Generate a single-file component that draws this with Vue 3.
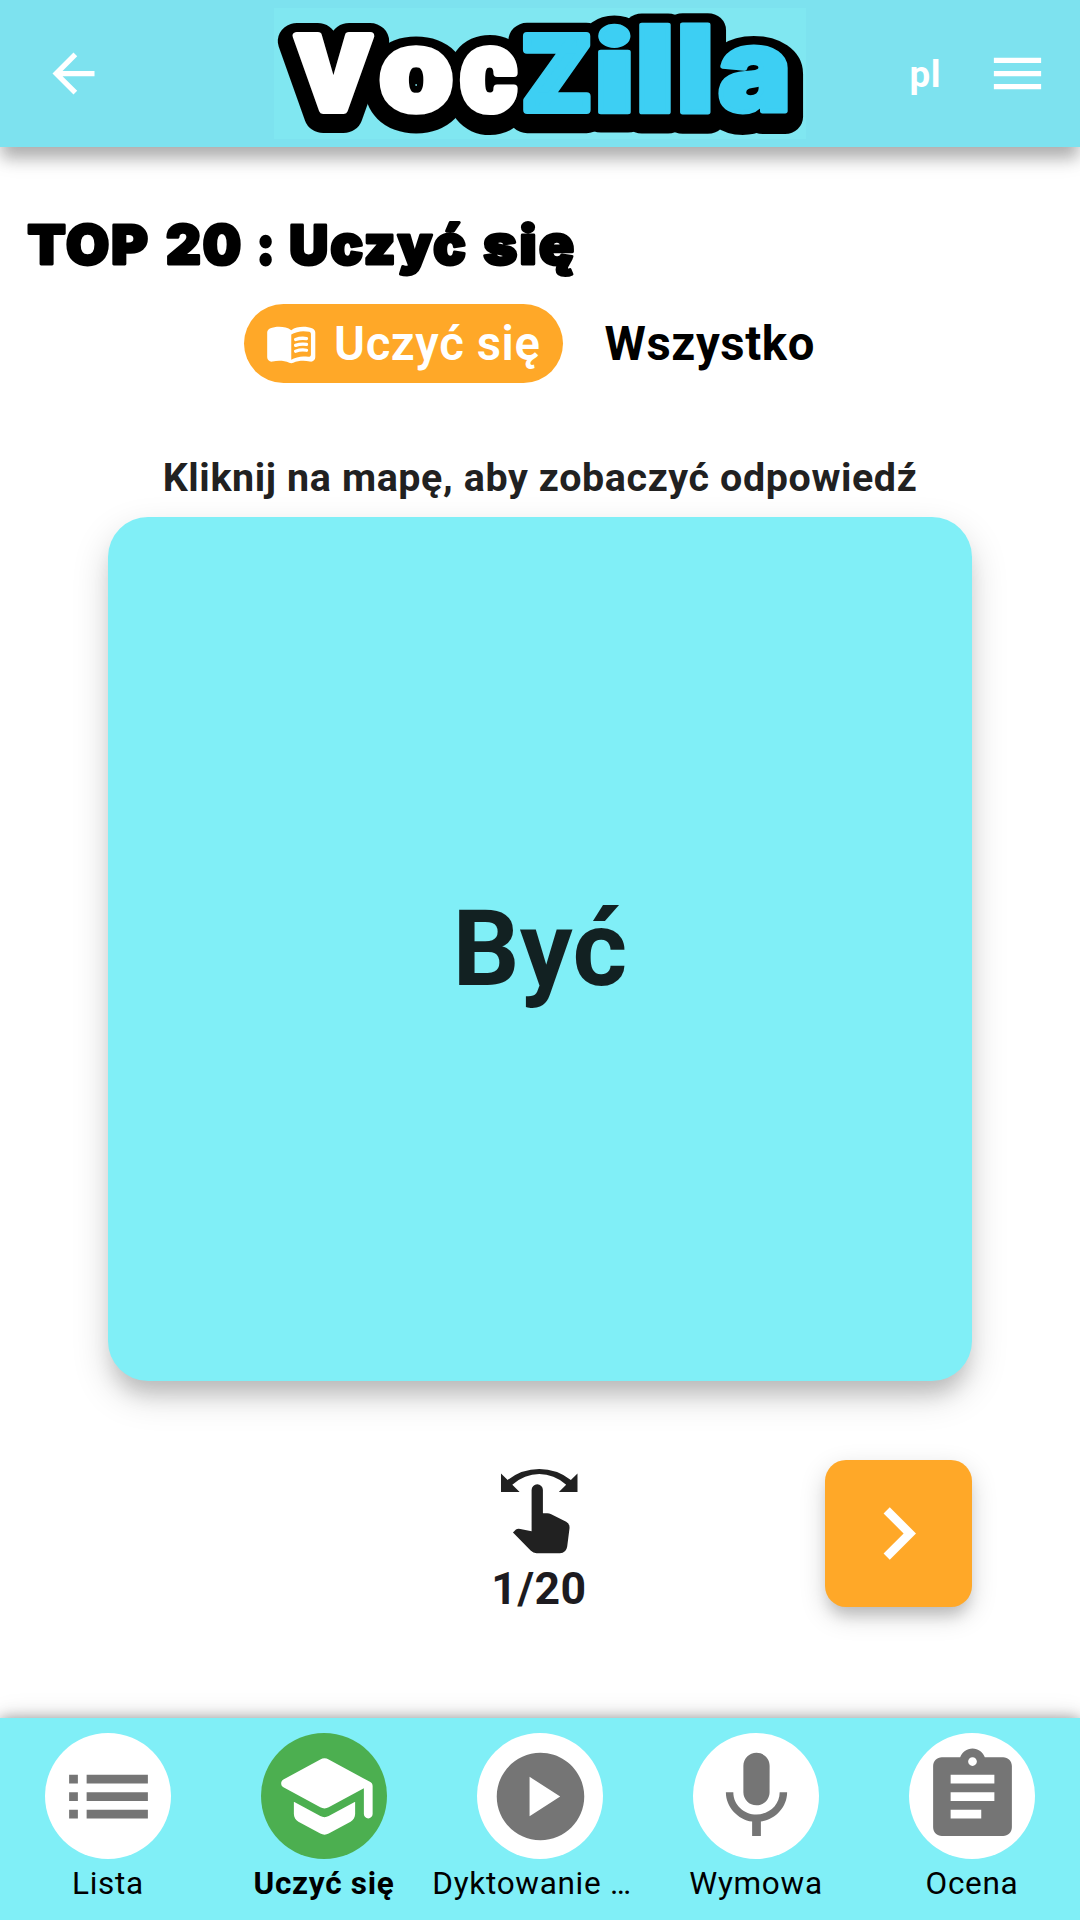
<script setup>
import { ref } from 'vue'

const ctx = document.createElement('canvas').getContext('2d')

// Matrix that stretches a string so that its ink fills the box x1..x2, y1..y2.
// capOnly fits the height of a capital letter instead of the full ink.
function fit(face, text, x1, x2, y1, y2, stroke, capOnly) {
  ctx.font = `900 100px ${face}, sans-serif`
  ctx.letterSpacing = capOnly ? '4px' : '0px'
  const m = ctx.measureText(text)
  const v = capOnly ? ctx.measureText('H') : m
  const h = stroke / 2
  const left = -m.actualBoundingBoxLeft
  const up = v.actualBoundingBoxAscent
  const down = capOnly ? 0 : v.actualBoundingBoxDescent
  const sx = (x2 - x1 - stroke) / (m.actualBoundingBoxRight - left)
  const sy = (y2 - y1 - stroke) / (up + down)
  return `matrix(${sx} 0 0 ${sy} ${x1 + h - left * sx} ${y1 + h + up * sy})`
}

const logo = [
  ['V', 292, 375, 31, 114, 'Roboto', 8],
  ['o', 379, 453, 45, 115, 'Roboto', 8],
  ['c', 459, 518, 45, 115, 'Roboto', 8],
  ['Z', 523, 591, 31, 114, 'Roboto', 8],
  ['i', 597, 631, 22, 114, 'Inter', 5],
  ['l', 638, 671, 22, 114, 'Inter', 5],
  ['l', 679, 711, 22, 114, 'Inter', 5],
  ['a', 718, 788, 45, 115, 'Inter', 5],
].map(([t, a, b, c, d, face, s], i) => ({
  t,
  m: fit(face, t, a, b, c, d, s),
  kind: face === 'Inter' ? 'round' : 'block',
  fill: i < 3 ? '#fff' : '#3dcff3',
}))

const title = [
  ['TOP', 27, 148.5],
  ['20', 166, 241],
  [':', 259, 272],
  ['Uczyć', 290, 466],
  ['się', 483, 574],
].map(([t, a, b]) => ({ t, m: fit('Inter', t, a, b, 76, 118, 3, true) }))

const active = ref(1)
const nav = [
  { label: 'Lista', d: 'M3 13h2v-2H3v2zm0 4h2v-2H3v2zm0-8h2V7H3v2zm4 4h14v-2H7v2zm0 4h14v-2H7v2zM7 7v2h14V7H7z' },
  { label: 'Uczyć się', d: 'M5 13.18v2.81c0 .73.4 1.41 1.04 1.76l5 2.73c.6.33 1.32.33 1.92 0l5-2.73c.64-.35 1.04-1.03 1.04-1.76v-2.81l-6.04 3.3c-.6.33-1.32.33-1.92 0L5 13.18zm6.04-9.66l-8.43 4.6c-.69.38-.69 1.38 0 1.76l8.43 4.6c.6.33 1.32.33 1.92 0L21 10.09V16c0 .55.45 1 1 1s1-.45 1-1V9.59c0-.37-.2-.7-.52-.88l-9.52-5.19c-.6-.32-1.32-.32-1.92 0z' },
  { label: 'Dyktowanie …', long: true, d: 'M12 2C6.48 2 2 6.48 2 12s4.48 10 10 10 10-4.48 10-10S17.52 2 12 2zm-2.5 14.5v-9l7 4.5-7 4.5z' },
  { label: 'Wymowa', d: 'M12 14c1.66 0 2.99-1.34 2.99-3L15 5c0-1.66-1.34-3-3-3S9 3.34 9 5v6c0 1.66 1.34 3 3 3zm5.3-3c0 3-2.54 5.1-5.3 5.1S6.7 14 6.7 11H5c0 3.41 2.72 6.23 6 6.72V21h2v-3.28c3.28-.48 6-3.3 6-6.72h-1.7z' },
  { label: 'Ocena', d: 'M19 3h-4.18C14.4 1.84 13.3 1 12 1c-1.3 0-2.4.84-2.82 2H5c-1.1 0-2 .9-2 2v14c0 1.1.9 2 2 2h14c1.1 0 2-.9 2-2V5c0-1.1-.9-2-2-2zm-7 0c.55 0 1 .45 1 1s-.45 1-1 1-1-.45-1-1 .45-1 1-1zm2 14H7v-2h7v2zm3-4H7v-2h10v2zm0-4H7V7h10v2z' },
]
</script>

<template>
  <div class="page">
    <header class="bar">
      <svg class="back" viewBox="0 0 24 24"><path d="M20 11H7.83l5.59-5.59L12 4l-8 8 8 8 1.41-1.41L7.83 13H20v-2z" /></svg>
      <svg class="logo" viewBox="274 8 532 131">
        <g transform="translate(0 5.4)">
          <text v-for="(g, i) in logo" :key="i" class="glyph outline" :class="g.kind" :transform="g.m" aria-hidden="true">{{ g.t }}</text>
          <text v-for="(g, i) in logo" :key="i" class="glyph outline inner" :class="g.kind" :transform="g.m" aria-hidden="true">{{ g.t }}</text>
        </g>
        <text v-for="(g, i) in logo" :key="i" class="glyph face" :class="g.kind" :transform="g.m" :fill="g.fill" :stroke="g.fill">{{ g.t }}</text>
      </svg>
      <span class="lang">pl</span>
      <svg class="menu" viewBox="0 0 24 24"><path d="M3 18h18v-2H3v2zm0-5h18v-2H3v2zm0-7v2h18V6H3z" /></svg>
    </header>

    <main class="content">
      <svg class="title" viewBox="0 0 1080 157">
        <text v-for="w in title" :key="w.t" class="glyph word" :transform="w.m">{{ w.t }}</text>
      </svg>

      <div class="tabs">
        <button class="pill">
          <svg viewBox="0 0 24 24">
            <path fill-rule="evenodd" d="M17.5 4.5c-1.95 0-4.05.4-5.5 1.5-1.45-1.1-3.55-1.5-5.5-1.5-1.45 0-2.99.22-4.28.79C1.49 5.62 1 6.33 1 7.14v11.28c0 1.3 1.22 2.26 2.48 1.94.98-.25 2.02-.36 3.02-.36 1.56 0 3.22.26 4.56.92.6.3 1.28.3 1.87 0 1.34-.67 3-.92 4.56-.92 1 0 2.04.11 3.02.36 1.26.33 2.48-.63 2.48-1.94V7.14c0-.81-.49-1.52-1.22-1.85-1.28-.57-2.82-.79-4.27-.79zM21 17.23c0 .63-.58 1.09-1.2.98-.75-.14-1.53-.2-2.3-.2-1.7 0-4.15.65-5.5 1.5V8c1.35-.85 3.8-1.5 5.5-1.5.92 0 1.83.09 2.7.28.46.1.8.51.8.98v9.47z" />
            <path class="line" d="M13.98 10.3c1.5-.55 3.3-.72 5-.46M13.98 12.98c1.5-.55 3.3-.72 5-.46M13.98 15.66c1.5-.55 3.3-.72 5-.46" />
          </svg>
          <span>Uczyć się</span>
        </button>
        <button class="all">Wszystko</button>
      </div>

      <p class="hint">Kliknij na mapę, aby zobaczyć odpowiedź</p>
      <section class="card">Być</section>

      <div class="controls">
        <div class="counter">
          <svg viewBox="121 86 230 253">
            <path d="M121 99L141 119Q183 86 236 86T331 119L351 99V155H295L317 133Q280 101 236 101T155 133L177 155H121Z" />
            <path d="M213 149a17 17 0 0 1 34 0V219H260Q266 219 272 222L317 244Q328 250 327 264L320 319Q317 339 298 339H228Q218 339 210 331L157 277L166 268Q171 264 179 266L213 273Z" />
          </svg>
          <span>1/20</span>
        </div>
        <button class="next"><svg viewBox="0 0 24 24"><path d="M10 6L8.59 7.41 13.17 12l-4.58 4.59L10 18l6-6z" /></svg></button>
      </div>
    </main>

    <nav class="nav">
      <a v-for="(n, i) in nav" :key="n.label" class="item" :class="{ on: i === active }" @click="active = i">
        <span class="disc"><svg viewBox="0 0 24 24"><path :d="n.d" /></svg></span>
        <span class="label" :class="{ long: n.long }">{{ n.label }}</span>
      </a>
    </nav>
  </div>
</template>

<style>
body { background: #fff; }
</style>

<style scoped>
* { box-sizing: border-box; }
svg { display: block; flex: none; fill: currentColor; overflow: visible; }
button { border: 0; background: none; padding: 0; font: inherit; color: inherit; letter-spacing: inherit; }
.page { width: 1080px; height: 1920px; overflow: hidden; display: flex; flex-direction: column; font-family: Roboto, sans-serif; color: #212121; }
.bar { position: relative; z-index: 1; height: 147px; flex: none; display: flex; align-items: center; padding-left: 42px; background: #7de2ef; color: #fff; box-shadow: 0 13px 14px -2px rgba(0,0,0,.22), 0 10px 22px 0 rgba(0,0,0,.14); }
.back, .menu { width: 63px; height: 63px; }
.logo { width: 532px; height: 131px; margin-left: 169px; background: #80e7f1; }
.glyph { font: 900 100px Inter, sans-serif; stroke-linejoin: round; vector-effect: non-scaling-stroke; }
.block { font-family: Roboto, sans-serif; }
.outline { fill: #000; stroke: #000; stroke-width: 37px; }
.outline.round { stroke-width: 35px; }
.outline.inner { stroke-width: 20px; }
.face { stroke-width: 8px; }
.face.round { stroke-width: 5px; }
.word { fill: #000; stroke: #000; stroke-width: 3px; letter-spacing: 4px; }
.lang { width: 76px; margin: 2px 0 0 103.5px; font-size: 36.75px; line-height: 44px; font-weight: 700; letter-spacing: .5px; }
.content { flex: 1; display: flex; flex-direction: column; }
.title { width: 1080px; height: 157px; }
.tabs { height: 79px; display: flex; align-items: center; padding-left: 244px; font-size: 47.25px; line-height: 79px; font-weight: 700; letter-spacing: .6px; color: #000; }
.pill { width: 318.5px; height: 79px; border-radius: 39.5px; background: #ffa828; color: #fff; display: flex; align-items: center; gap: 16.5px; padding-left: 21px; font-weight: 600; }
.pill svg { width: 52.5px; height: 52.5px; }
.pill span { padding-top: 2px; }
.all { margin-left: 42px; padding-top: 2px; }
.line { fill: none; stroke: currentColor; stroke-width: 1.5; stroke-linecap: round; }
.hint { margin: 69.5px 0 14.5px; text-align: center; font-size: 39.4px; line-height: 50px; font-weight: 700; letter-spacing: .62px; }
.card { align-self: center; width: 864px; height: 864px; border-radius: 40px; background: #80eff7; display: flex; align-items: center; justify-content: center; font-size: 105px; font-weight: 700; letter-spacing: .4px; color: #122122; box-shadow: 0 18px 20px -6px rgba(0,0,0,.15), 0 15px 36px 0 rgba(0,0,0,.17); }
.controls { margin-top: 79px; padding: 0 108px; height: 147px; display: grid; grid-template-columns: 1fr 147px; }
.counter { padding-left: 147px; display: flex; flex-direction: column; align-items: center; padding-top: 9px; }
.counter svg { width: 76.5px; height: 84.3px; margin-left: -2px; }
.counter span { margin: 10.5px 2px 0 0; line-height: 50px; font-size: 44.6px; font-weight: 700; letter-spacing: .5px; color: #1d1b20; }
.next { width: 147px; height: 147px; border-radius: 21px; background: #ffa828; color: #fff; display: flex; align-items: center; justify-content: center; box-shadow: 0 12px 14px -4px rgba(0,0,0,.15), 0 9px 26px 0 rgba(0,0,0,.17); }
.next svg { width: 105px; height: 105px; }
.nav { position: relative; height: 202.3px; flex: none; display: grid; grid-template-columns: repeat(5, 216px); background: #80eff7; color: #000; box-shadow: 0 0 13px rgba(0,0,0,.35), 0 0 26px rgba(0,0,0,.12); }
.item { display: flex; flex-direction: column; align-items: center; padding-top: 15.7px; }
.disc { width: 126px; height: 126px; border-radius: 50%; background: #fff; color: #757575; display: flex; align-items: center; justify-content: center; }
.disc svg { width: 105px; height: 105px; }
.label { margin-top: 4.8px; line-height: 40px; font-size: 31.5px; letter-spacing: .7px; white-space: nowrap; }
.long { margin-right: 16px; }
.on .disc { background: #4caf50; color: #fff; }
.on .label { font-weight: 700; }
</style>
